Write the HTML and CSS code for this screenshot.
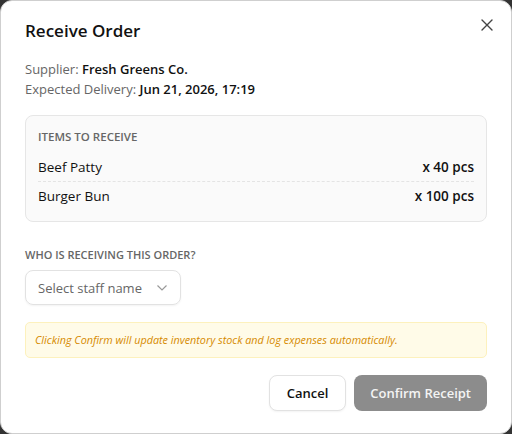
FILE: index.html
```html
<!DOCTYPE html>
<html lang="en">
<head>
    <meta charset="UTF-8">
    <meta name="viewport" content="width=device-width, initial-scale=1.0">
    <title>Receive Order</title>
    <link rel="stylesheet" href="styles.css">
</head>
<body>
    <div class="modal">
        <button class="close" type="button" aria-label="Close">
            <svg width="12" height="12" viewBox="0 0 12 12"><path d="M1 1L11 11M11 1L1 11" stroke="#444" stroke-width="1.4" stroke-linecap="round"/></svg>
        </button>

        <h2 class="title">Receive Order</h2>

        <div class="meta">
            <p>Supplier: <b>Fresh Greens Co.</b></p>
            <p>Expected Delivery: <b>Jun 21, 2026, 17:19</b></p>
        </div>

        <div class="items">
            <div class="label">Items to receive</div>
            <div class="row"><span>Beef Patty</span><b>x 40 pcs</b></div>
            <div class="row"><span>Burger Bun</span><b>x 100 pcs</b></div>
        </div>

        <div class="label who">Who is receiving this order?</div>
        <div class="select">
            <span>Select staff name</span>
            <svg width="12" height="8" viewBox="0 0 12 8"><path d="M1.5 1.5L6 6L10.5 1.5" fill="none" stroke="#999" stroke-width="1.2"/></svg>
        </div>

        <div class="notice">Clicking Confirm will update inventory stock and log expenses automatically.</div>

        <div class="actions">
            <button class="btn cancel" type="button">Cancel</button>
            <button class="btn confirm" type="button" disabled>Confirm Receipt</button>
        </div>
    </div>
</body>
</html>
```

FILE: styles.css
```css
html, body { margin: 0; height: 100%; }
body { background-color: #333; font-family: "Open Sans", "Noto Sans", sans-serif; color: #111; }
.modal { position: relative; box-sizing: border-box; height: 434px; background: #fff; border: 1px solid #cfcfcf; border-radius: 12px; padding: 18px 24px 24px; }
.close { position: absolute; top: 16px; right: 16px; background: none; border: none; padding: 2px; cursor: pointer; }
.title { margin: 0 0 16px; font-size: 17px; font-weight: 600; line-height: 24px; }
.meta p { margin: 0; font-size: 13px; line-height: 20px; color: #666; }
.meta b { color: #111; font-weight: 600; }
.items { margin-top: 16px; background: #fafafa; border: 1px solid #e6e6e6; border-radius: 8px; padding: 11px 12px 11px; }
.label { font-size: 11.5px; font-weight: 600; color: #666; text-transform: uppercase; line-height: 20px; }
.row { display: flex; justify-content: space-between; font-size: 13.5px; line-height: 20px; padding: 4px 0; }
.row + .row { border-top: 1px dashed #e4e4e4; }
.items .label { margin-bottom: 6px; }
.row b { font-weight: 600; }
.who { margin-top: 23px; margin-bottom: 5px; font-size: 11px; }
.select { display: inline-flex; align-items: center; gap: 14px; height: 35px; box-sizing: border-box; padding: 0 12px; border: 1px solid #e2e2e2; border-radius: 8px; font-size: 13px; color: #666; box-shadow: 0 1px 2px rgba(0, 0, 0, 0.05); }
.notice { margin-top: 17px; background: #fffbe8; border: 1px solid #fdf1bd; border-radius: 5px; padding: 9px 9px; font-size: 10.8px; font-style: italic; color: #d68a00; line-height: 16px; }
.actions { display: flex; justify-content: flex-end; gap: 8px; margin-top: 17px; }
.btn { font-family: inherit; font-size: 13px; font-weight: 600; height: 36px; border-radius: 8px; padding: 0 16px; cursor: pointer; }
.cancel { background: #fff; border: 1px solid #e2e2e2; color: #111; padding: 0 17px; box-shadow: 0 1px 2px rgba(0, 0, 0, 0.05); }
.confirm { background: #8c8c8c; border: none; color: #f4f4f4; }
```
